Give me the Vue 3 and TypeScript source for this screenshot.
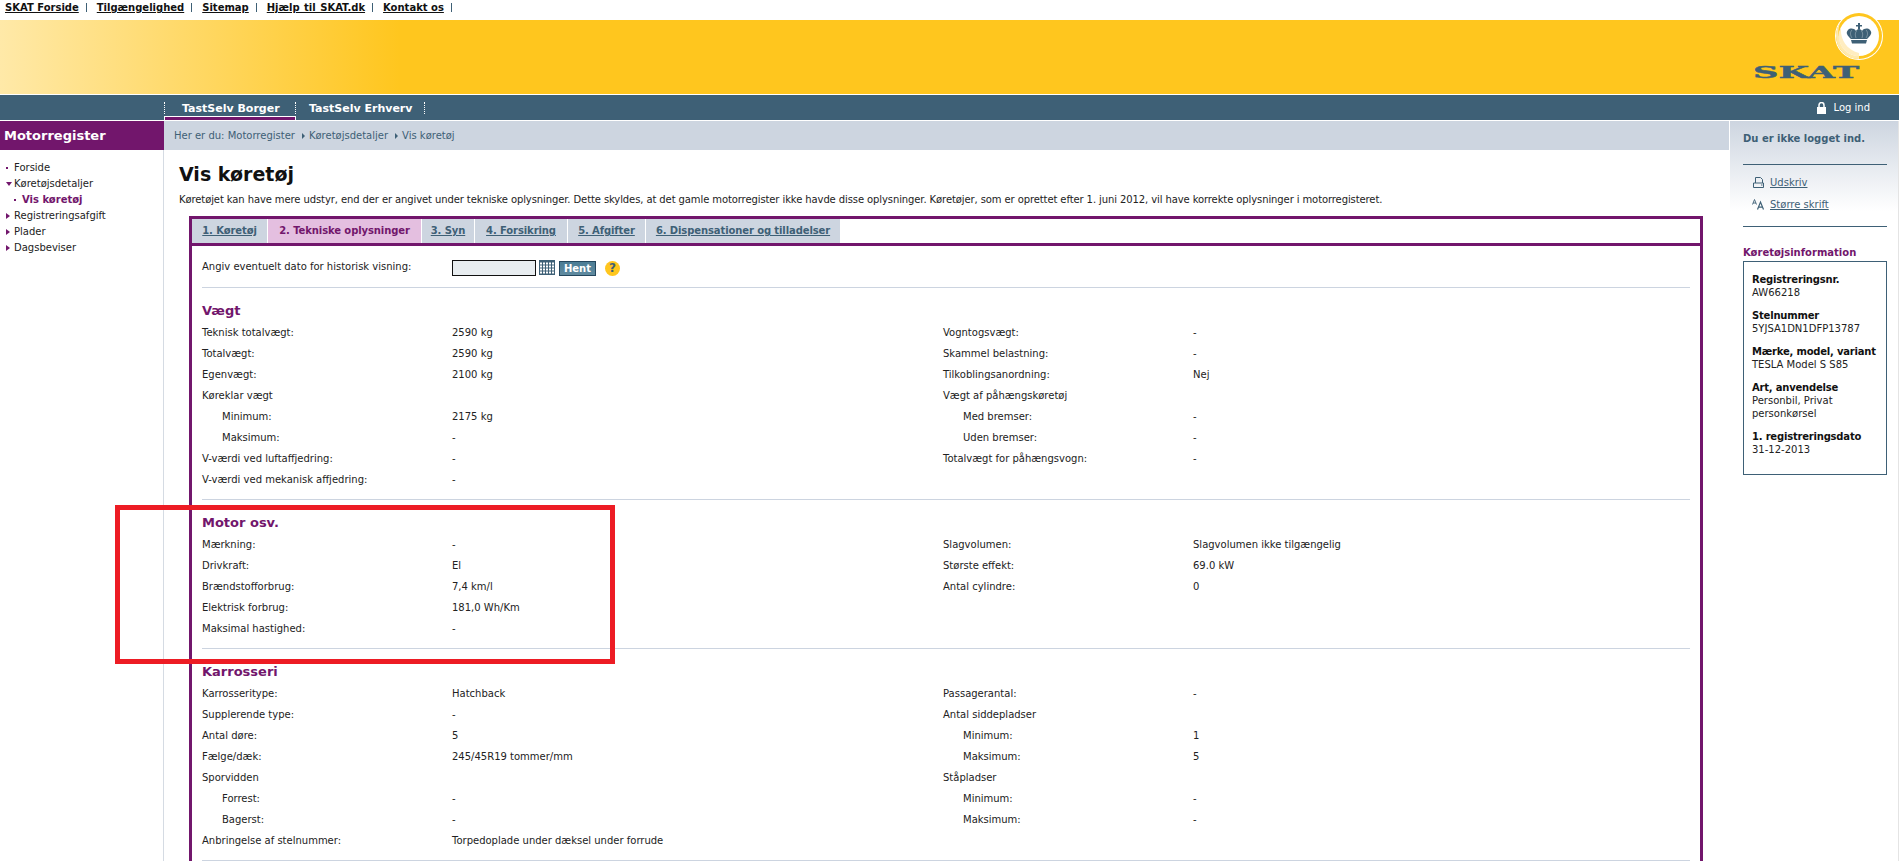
<script setup lang="ts">
interface Row { label?: string; value?: string; sub?: boolean }
interface Section { title: string; left: Row[]; right: Row[] }

const topLinks = ['SKAT Forside', 'Tilgængelighed', 'Sitemap', 'Hjælp til SKAT.dk', 'Kontakt os']
const tabs = ['1. Køretøj', '2. Tekniske oplysninger', '3. Syn', '4. Forsikring', '5. Afgifter', '6. Dispensationer og tilladelser']

const sections: Section[] = [
  {
    title: 'Vægt',
    left: [
      { label: 'Teknisk totalvægt:', value: '2590 kg' },
      { label: 'Totalvægt:', value: '2590 kg' },
      { label: 'Egenvægt:', value: '2100 kg' },
      { label: 'Køreklar vægt' },
      { label: 'Minimum:', value: '2175 kg', sub: true },
      { label: 'Maksimum:', value: '-', sub: true },
      { label: 'V-værdi ved luftaffjedring:', value: '-' },
      { label: 'V-værdi ved mekanisk affjedring:', value: '-' }
    ],
    right: [
      { label: 'Vogntogsvægt:', value: '-' },
      { label: 'Skammel belastning:', value: '-' },
      { label: 'Tilkoblingsanordning:', value: 'Nej' },
      { label: 'Vægt af påhængskøretøj' },
      { label: 'Med bremser:', value: '-', sub: true },
      { label: 'Uden bremser:', value: '-', sub: true },
      { label: 'Totalvægt for påhængsvogn:', value: '-' }
    ]
  },
  {
    title: 'Motor osv.',
    left: [
      { label: 'Mærkning:', value: '-' },
      { label: 'Drivkraft:', value: 'El' },
      { label: 'Brændstofforbrug:', value: '7,4 km/l' },
      { label: 'Elektrisk forbrug:', value: '181,0 Wh/Km' },
      { label: 'Maksimal hastighed:', value: '-' }
    ],
    right: [
      { label: 'Slagvolumen:', value: 'Slagvolumen ikke tilgængelig' },
      { label: 'Største effekt:', value: '69.0 kW' },
      { label: 'Antal cylindre:', value: '0' }
    ]
  },
  {
    title: 'Karrosseri',
    left: [
      { label: 'Karrosseritype:', value: 'Hatchback' },
      { label: 'Supplerende type:', value: '-' },
      { label: 'Antal døre:', value: '5' },
      { label: 'Fælge/dæk:', value: '245/45R19 tommer/mm' },
      { label: 'Sporvidden' },
      { label: 'Forrest:', value: '-', sub: true },
      { label: 'Bagerst:', value: '-', sub: true },
      { label: 'Anbringelse af stelnummer:', value: 'Torpedoplade under dæksel under forrude' }
    ],
    right: [
      { label: 'Passagerantal:', value: '-' },
      { label: 'Antal siddepladser' },
      { label: 'Minimum:', value: '1', sub: true },
      { label: 'Maksimum:', value: '5', sub: true },
      { label: 'Ståpladser' },
      { label: 'Minimum:', value: '-', sub: true },
      { label: 'Maksimum:', value: '-', sub: true }
    ]
  }
]

const nav = [
  { text: 'Forside', mark: 'dot' },
  { text: 'Køretøjsdetaljer', mark: 'down' },
  { text: 'Vis køretøj', mark: 'dot', active: true },
  { text: 'Registreringsafgift', mark: 'right' },
  { text: 'Plader', mark: 'right' },
  { text: 'Dagsbeviser', mark: 'right' }
]

const info = [
  { label: 'Registreringsnr.', lines: ['AW66218'] },
  { label: 'Stelnummer', lines: ['5YJSA1DN1DFP13787'] },
  { label: 'Mærke, model, variant', lines: ['TESLA Model S S85'] },
  { label: 'Art, anvendelse', lines: ['Personbil, Privat', 'personkørsel'] },
  { label: '1. registreringsdato', lines: ['31-12-2013'] }
]
</script>

<template>
  <div class="page">
    <nav class="toplinks">
      <a v-for="l in topLinks" :key="l" class="toplink">{{ l }}</a>
    </nav>

    <header class="banner">
      <div class="logo">
        <svg class="seal" width="48" height="48" viewBox="0 0 48 48">
          <circle cx="24" cy="24" r="24" fill="#fff" />
          <circle cx="24" cy="24" r="23" fill="#ffc61e" />
          <path d="M24 47A23 23 0 0 1 5 11C1 22 4 38 24 44Z" fill="#ffe9ad" />
          <circle cx="24" cy="24" r="20" fill="#fff" />
          <path d="M24 44A20 20 0 0 1 6 15C5 26 10 37 24 41Z" fill="#ffedc0" />
          <g fill="#3e6076">
            <path d="M23 11h2v2h2v1.600h-2v2.400h-2v-2.400h-2V13h2z" />
            <path d="M16 27C13 24 10 21 13 18C15 16 19 16 21 19C21.500 18 22.500 17 24 17C25.500 17 26.500 18 27 19C29 16 33 16 35 18C38 21 35 24 32 27Z" />
            <path d="M16 28h16l-1 3.500H17z" />
          </g>
          <path d="M17 26C15 23 15 20 17 18M21 26C20 23 20 21 21.500 19M27 26C28 23 28 21 26.500 19M31 26C33 23 33 20 31 18" fill="none" stroke="#fff" stroke-width=".5" opacity=".6" />
        </svg>
        <span class="wordmark">SKAT</span>
      </div>
    </header>

    <div class="mainbar">
      <div class="mainbar-tabs">
        <a class="mtab mtab-on">TastSelv Borger</a>
        <a class="mtab">TastSelv Erhverv</a>
      </div>
      <a class="login">
        <svg width="9" height="12" viewBox="0 0 9 12">
          <path d="M0 5h9v7H0z" fill="#fff" />
          <path d="M2 5V3a2.500 2.500 0 0 1 5 0v2" fill="none" stroke="#fff" stroke-width="1.500" />
        </svg>
        Log ind
      </a>
    </div>

    <div class="columns">
      <aside class="left">
        <div class="left-title">Motorregister</div>
        <ul class="menu">
          <li v-for="n in nav" :key="n.text" :class="['menu-item', { 'menu-on': n.active }]">
            <i :class="['mark', 'mark-' + n.mark]"></i>{{ n.text }}
          </li>
        </ul>
      </aside>

      <main class="center">
        <div class="crumbs">
          Her er du: Motorregister<i class="crumb-arrow"></i>Køretøjsdetaljer<i class="crumb-arrow"></i>Vis køretøj
        </div>
        <div class="content">
          <h1>Vis køretøj</h1>
          <p class="intro">Køretøjet kan have mere udstyr, end der er angivet under tekniske oplysninger. Dette skyldes, at det gamle motorregister ikke havde disse oplysninger. Køretøjer, som er oprettet efter 1. juni 2012, vil have korrekte oplysninger i motorregisteret.</p>
          <div class="box">
            <div class="tabs">
              <a v-for="(t, i) in tabs" :key="t" :class="['tab', { 'tab-on': i === 1 }]">{{ t }}</a>
            </div>
            <div class="box-body">
              <div class="dateform">
                <span class="date-label">Angiv eventuelt dato for historisk visning:</span>
                <span class="date-input"></span>
                <svg class="cal" width="16" height="15" viewBox="0 0 16 15">
                  <rect width="16" height="15" fill="#3e6076" />
                  <g fill="#fff">
                    <template v-for="y in 4" :key="y">
                      <rect v-for="x in 5" :key="x" :x="x * 3 - 2" :y="y * 3 - 0.5" width="2" height="2" />
                    </template>
                  </g>
                </svg>
                <span class="hent">Hent</span>
                <span class="help">?</span>
              </div>
              <section v-for="s in sections" :key="s.title" class="section">
                <h2>{{ s.title }}</h2>
                <div class="cols">
                  <div v-for="(col, ci) in [s.left, s.right]" :key="ci" class="col">
                    <div v-for="(r, ri) in col" :key="ri" :class="['row', { 'row-sub': r.sub }]">
                      <span class="row-label">{{ r.label }}</span>
                      <span class="row-value">{{ r.value }}</span>
                    </div>
                  </div>
                </div>
              </section>
            </div>
          </div>
        </div>
      </main>

      <aside class="right">
        <div class="login-note">Du er ikke logget ind.</div>
        <div class="tools">
          <a class="tool">
            <svg width="11" height="11" viewBox="0 0 11 11">
              <path d="M2.500 6V.5h5l2 2V6M.500 6h10v4.500H.500z" fill="none" stroke="#3e6076" />
              <path d="M8 8h1.500" stroke="#3e6076" />
            </svg>
            <span>Udskriv</span>
          </a>
          <a class="tool">
            <svg width="13" height="11" viewBox="0 0 13 11">
              <path d="M.500 5.500L2.500.5l2 5M1 4h3" fill="none" stroke="#3e6076" stroke-width=".9" />
              <path d="M5.500 10.500L8.500 3l3 7.500M6.700 8.200h3.600" fill="none" stroke="#3e6076" stroke-width="1.200" />
            </svg>
            <span>Større skrift</span>
          </a>
        </div>
        <h3>Køretøjsinformation</h3>
        <div class="infobox">
          <div v-for="f in info" :key="f.label" class="info-field">
            <strong>{{ f.label }}</strong>
            <span v-for="l in f.lines" :key="l">{{ l }}</span>
          </div>
        </div>
      </aside>
    </div>

    <div class="highlight"></div>
  </div>
</template>

<style>
html, body { margin: 0; height: 861px; overflow: hidden; background: #fff; }
</style>

<style scoped>
.page {
  position: relative;
  height: 861px;
  overflow: hidden;
  font-family: "DejaVu Sans", Verdana, sans-serif;
  font-size: 10px;
  color: #222;
}
.toplinks { display: flex; align-items: center; height: 20px; padding-left: 5px; box-sizing: border-box; padding-bottom: 4px; }
.toplink {
  color: #111;
  font-weight: 700;
  text-decoration: underline;
  padding-right: 8px;
  margin-right: 10px;
  position: relative;
  line-height: 10px;
}
.toplink:nth-child(4) { word-spacing: 1px; }
.toplink::after { content: ""; position: absolute; right: 0; top: 0; height: 9px; width: 1px; background: #3e6076; }
.banner {
  position: relative;
  height: 74px;
  background: linear-gradient(90deg, #ffe9a8 0, #ffc61e 400px);
}
.logo { position: absolute; left: 1753px; top: -8px; width: 132px; height: 68px; }
.seal { position: absolute; left: 82px; top: 0; }
.wordmark {
  position: absolute;
  left: 0;
  top: 51px;
  color: #3e6076;
  font: 700 16px/19px "DejaVu Serif", serif;
  -webkit-text-stroke: .4px #3e6076;
  transform-origin: left center;
  transform: scale(2.2, 1.05);
}
.mainbar {
  display: flex;
  justify-content: space-between;
  height: 25px;
  margin-top: 1px;
  background: #3e6076;
  padding: 0 29px 0 164px;
}
.mainbar-tabs { display: flex; align-items: flex-start; }
.mtab {
  color: #fff;
  font-weight: 700;
  font-size: 11px;
  line-height: 13px;
  box-sizing: border-box;
  width: 131px;
  padding-left: 17px;
  border-left: 1px dotted #fff;
  height: 12px;
  margin-top: 7px;
  position: relative;
}
.mtab:last-child { border-right: 1px dotted #fff; padding-left: 13px; width: 130px; }
.mtab-on::after {
  content: "";
  position: absolute;
  left: -1px;
  right: -1px;
  top: 14px;
  height: 4px;
  box-sizing: border-box;
  background: #72166c;
  border: 1px solid #fff;
  border-bottom: none;
}
.login { display: flex; align-items: center; gap: 7px; color: #fff; }
.columns { display: flex; margin-top: 1px; height: 740px; }
.left { width: 164px; flex: none; box-sizing: border-box; border-right: 1px solid #d5dbe3; }
.left-title {
  margin-right: -1px;
  height: 29px;
  background: #72166c;
  color: #fff;
  font-weight: 700;
  font-size: 13px;
  line-height: 30px;
  padding-left: 4px;
}
.menu { list-style: none; margin: 10px 0 0; padding: 0; }
.menu-item { position: relative; height: 16px; line-height: 16px; padding-left: 14px; color: #222; }
.menu-on { padding-left: 22px; color: #72166c; font-weight: 700; }
.mark { position: absolute; top: 7px; left: 6px; }
.menu-on .mark { left: 14px; }
.mark-dot { width: 2px; height: 2px; background: #72166c; }
.mark-right { top: 5px; border-left: 4px solid #72166c; border-top: 3px solid transparent; border-bottom: 3px solid transparent; }
.mark-down { left: 6px; top: 6px; border-top: 4px solid #72166c; border-left: 3px solid transparent; border-right: 3px solid transparent; }
.center { flex: 1; min-width: 0; }
.crumbs { height: 29px; line-height: 30px; background: #cdd5e0; padding-left: 10px; color: #3e6076; }
.crumb-arrow {
  display: inline-block;
  margin: 0 4px 0 7px;
  border-left: 3px solid #3e6076;
  border-top: 3px solid transparent;
  border-bottom: 3px solid transparent;
}
.content { padding: 0 26px 0 15px; }
h1 { margin: 11px 0 0; font-size: 19px; line-height: 26px; font-weight: 700; color: #111; }
.intro { margin: 6px 0 0; line-height: 14px; white-space: nowrap; color: #222; letter-spacing: -.1px; }
.box { margin: 9px 0 0 10px; border: 3px solid #72166c; border-bottom: none; height: 800px; box-sizing: border-box; }
.tabs { display: flex; gap: 1px; height: 24px; border-bottom: 3px solid #72166c; }
.tab {
  background: #cdd5e0;
  color: #3e6076;
  font-weight: 700;
  line-height: 24px;
  text-align: center;
  white-space: nowrap;
  text-decoration: underline;
  height: 24px;
  letter-spacing: -.1px;
}
.tab:nth-child(1) { width: 75px; }
.tab:nth-child(2) { width: 153px; }
.tab:nth-child(3) { width: 52px; }
.tab:nth-child(4) { width: 92px; }
.tab:nth-child(5) { width: 77px; }
.tab:nth-child(6) { width: 194px; }
.tab-on { background: #e4bfe0; color: #72166c; text-decoration: none; height: 24px; }
.box-body { padding: 0 10px; }
.dateform { display: flex; align-items: flex-start; height: 27px; padding-top: 14px; border-bottom: 1px solid #ccd4e0; }
.date-label { width: 250px; line-height: 14px; }
.date-input { width: 84px; height: 16px; box-sizing: border-box; border: 1px solid #111; background: #e8edf0; }
.cal { margin-left: 3px; }
.hent {
  margin: 1px 0 0 4px;
  width: 37px;
  height: 15px;
  box-sizing: border-box;
  border: 1px solid #24475e;
  background: linear-gradient(#4c7d95, #5f8a9f);
  color: #fff;
  font-weight: 700;
  font-size: 10px;
  line-height: 13px;
  text-align: center;
}
.help {
  margin: 1px 0 0 9px;
  width: 15px;
  height: 15px;
  border-radius: 50%;
  background: #ffc61e;
  color: #3e6076;
  font-weight: 700;
  font-size: 12px;
  line-height: 15px;
  text-align: center;
}
.section { border-bottom: 1px solid #ccd4e0; padding-bottom: 9px; }
h2 { margin: 0; padding-top: 12px; font-size: 13px; line-height: 22px; font-weight: 700; color: #72166c; }
.cols { display: flex; }
.col { width: 741px; flex: none; }
.row { display: flex; height: 21px; line-height: 21px; }
.row-label { width: 250px; flex: none; box-sizing: border-box; }
.row-sub .row-label { padding-left: 20px; }
.right {
  flex: none;
  margin-left: 1px;
  border-right: 1px solid #e4e4e4;
  box-sizing: content-box;
  padding: 0 11px 0 13px;
  width: 144px;
  background: linear-gradient(#cdd5e0 0, #fff 90px);
}
.login-note { height: 43px; border-bottom: 1px solid #3e6076; line-height: 36px; font-weight: 700; color: #3e6076; }
.tools { height: 62px; border-bottom: 1px solid #3e6076; padding-top: 6px; box-sizing: border-box; }
.tool { display: flex; align-items: center; height: 22px; color: #3e6076; padding-left: 9px; gap: 5px; }
.tool svg { width: 13px; }
.tool span { text-decoration: underline; }
h3 { margin: 19px 0 0; font-size: 10px; line-height: 14px; font-weight: 700; color: #72166c; }
.infobox { height: 214px; box-sizing: border-box; margin-top: 1px; border: 1px solid #3e6076; padding: 11px 8px 0; }
.info-field { display: flex; flex-direction: column; margin-bottom: 10px; line-height: 13px; }
.info-field strong { color: #111; letter-spacing: -.2px; white-space: nowrap; }
.highlight {
  position: absolute;
  left: 115px;
  top: 505px;
  width: 500px;
  height: 159px;
  box-sizing: border-box;
  border: 5px solid #ed1c24;
}
</style>
